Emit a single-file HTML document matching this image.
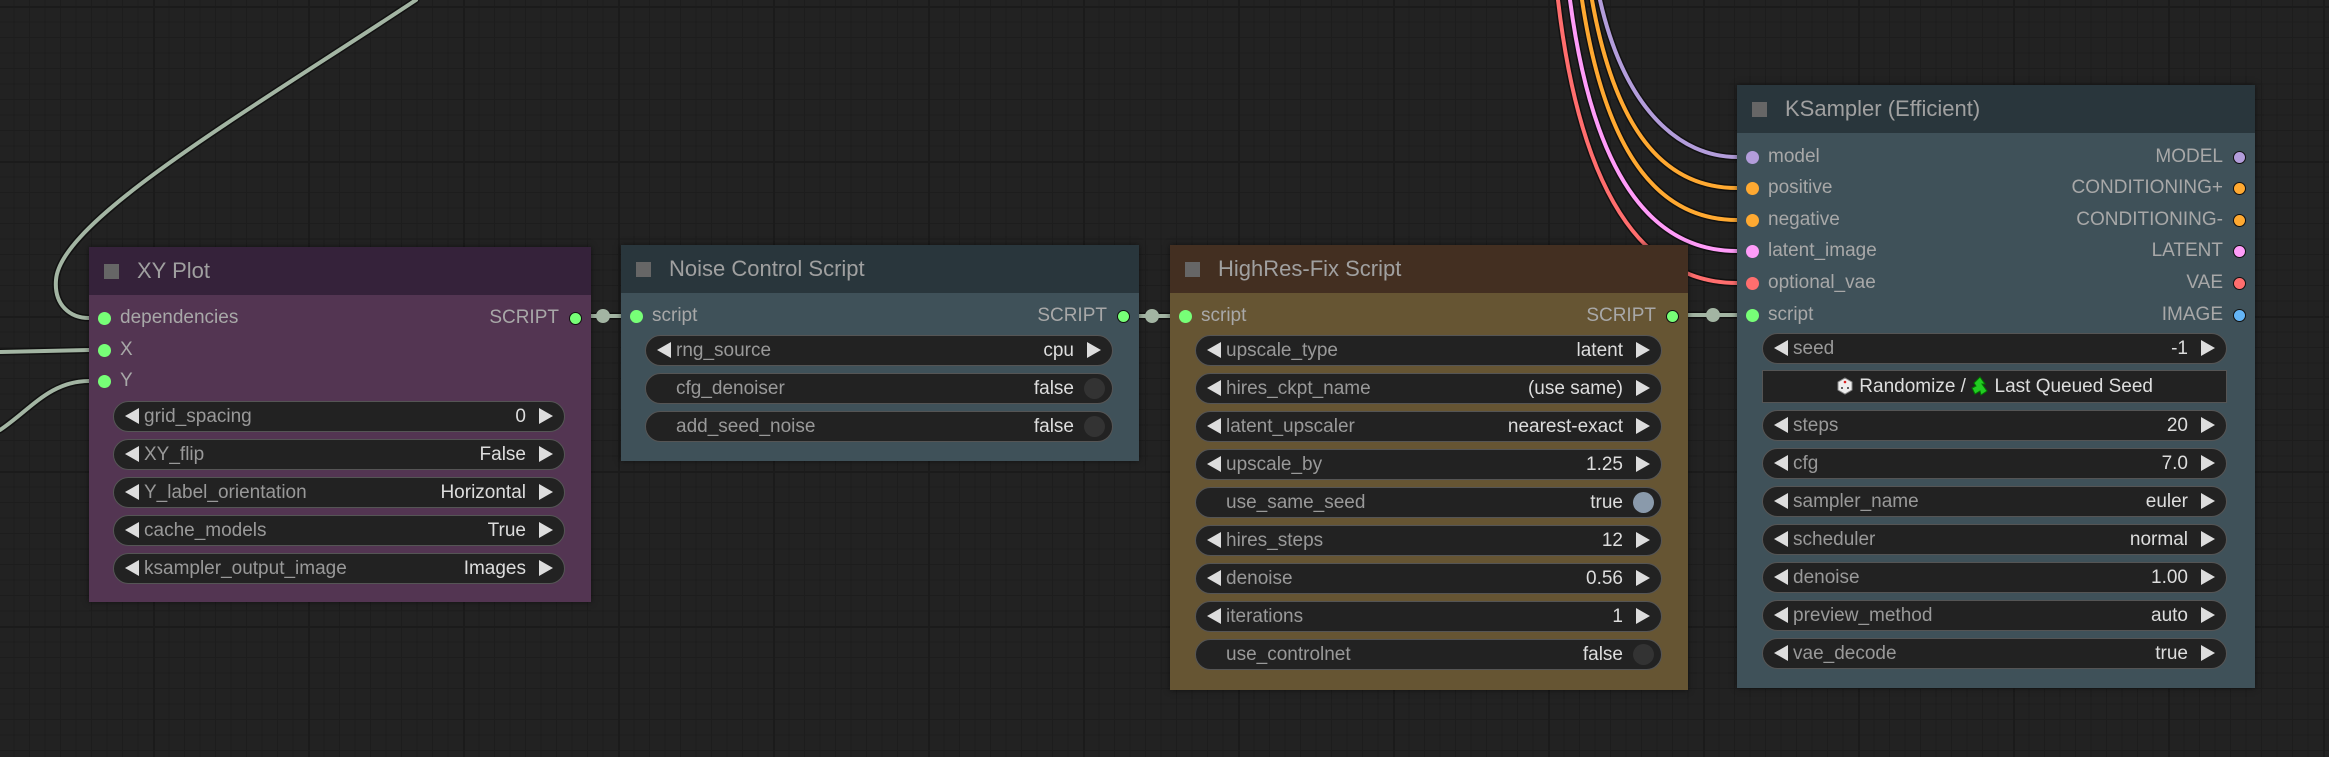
<!DOCTYPE html>
<html><head><meta charset="utf-8"><style>
*{margin:0;padding:0;box-sizing:border-box}
body{width:2329px;height:757px;overflow:hidden;position:relative;font-family:"Liberation Sans",Arial,sans-serif;font-size:19px;
background-color:#222;
background-image:
linear-gradient(to right,#1b1b1b 2px,transparent 2px),
linear-gradient(to bottom,#1b1b1b 2px,transparent 2px),
linear-gradient(to right,#1d1d1d 1px,transparent 1px),
linear-gradient(to bottom,#1d1d1d 1px,transparent 1px);
background-size:155px 155px,155px 155px,15.5px 15.5px,15.5px 15.5px;
background-position:-2px 6px,-2px 6px,-2px 6px,-2px 6px}
svg.links{position:absolute;left:0;top:0}
.node{position:absolute;box-shadow:0 0 6px rgba(0,0,0,.5)}
.title{position:absolute;left:0;top:0;right:0;height:48px;color:#a0a0a0;font-size:22px;line-height:48px;padding-left:48px}
.title:before{content:"";position:absolute;left:15px;top:17px;width:15px;height:15px;background:#666}
.slot{position:absolute;color:#a8a8a8;line-height:20px;height:20px}
.dot{position:absolute;width:13px;height:13px;border-radius:50%}
.w{position:absolute;height:31px;border:1.5px solid #555;border-radius:16px;background:#222;color:#999;line-height:30px}
.w .l{position:absolute;left:30px}
.w .v{position:absolute;right:38px;color:#ddd}
.w .la{position:absolute;left:11px;top:6px;width:0;height:0;border-top:8px solid transparent;border-bottom:8px solid transparent;border-right:14px solid #ddd}
.w .ra{position:absolute;right:11px;top:6px;width:0;height:0;border-top:8px solid transparent;border-bottom:8px solid transparent;border-left:14px solid #ddd}
.w.t .v{right:38px}
.w .tg{position:absolute;right:7px;top:4px;width:21px;height:21px;border-radius:50%;background:#333}
.w .tg.on{background:#8a9aab}
</style></head><body>
<svg class="links" width="2329" height="757">
<g fill="none" stroke-linecap="round">
<g stroke="#111" stroke-width="7">
<path d="M416,0 C250,110 60,220 56,280 C54,305 70,318 89,318"/>
<path d="M0,352 L89,350"/>
<path d="M0,430 C30,410 50,381 89,381"/>
<path d="M573,316 L621,316"/><path d="M1123,316 L1170,316"/><path d="M1671,315 L1737,315"/>
<path d="M1600,0 C1625,110 1680,157 1737,157"/>
<path d="M1592,0 C1617,140 1670,188 1737,188"/>
<path d="M1582,0 C1607,165 1665,220 1737,220"/>
<path d="M1570,0 C1595,190 1660,251 1737,251"/>
<path d="M1558,0 C1583,215 1655,283 1737,283"/>
</g>
<g stroke-width="4">
<path stroke="#a3b5a3" d="M416,0 C250,110 60,220 56,280 C54,305 70,318 89,318"/>
<path stroke="#a3b5a3" d="M0,352 L89,350"/>
<path stroke="#a3b5a3" d="M0,430 C30,410 50,381 89,381"/>
<path stroke="#a3b5a3" d="M573,316 L621,316"/><path stroke="#a3b5a3" d="M1123,316 L1170,316"/><path stroke="#a3b5a3" d="M1671,315 L1737,315"/>
<path stroke="#b39ddb" d="M1600,0 C1625,110 1680,157 1737,157"/>
<path stroke="#ffa931" d="M1592,0 C1617,140 1670,188 1737,188"/>
<path stroke="#ffa931" d="M1582,0 C1607,165 1665,220 1737,220"/>
<path stroke="#ff9cf9" d="M1570,0 C1595,190 1660,251 1737,251"/>
<path stroke="#ff6e6e" d="M1558,0 C1583,215 1655,283 1737,283"/>
</g>
<g fill="#a3b5a3"><circle cx="603" cy="316" r="7"/><circle cx="1152" cy="316" r="7"/><circle cx="1713" cy="315" r="7"/></g>
</g>
</svg>

<!-- XY Plot -->
<div class="node" style="left:89px;top:247px;width:502px;height:355px;background:#533552">
<div class="title" style="background:#35223a">XY Plot</div>
<div class="dot" style="left:9px;top:65px;background:#7f7"></div><div class="slot" style="left:31px;top:61px">dependencies</div>
<div class="slot" style="right:32px;top:61px">SCRIPT</div><div class="dot" style="right:9px;top:65px;background:#7f7;border:1.5px solid #111"></div>
<div class="dot" style="left:9px;top:97px;background:#7f7"></div><div class="slot" style="left:31px;top:93px">X</div>
<div class="dot" style="left:9px;top:128px;background:#7f7"></div><div class="slot" style="left:31px;top:124px">Y</div>
<div class="w" style="left:24px;right:26px;top:154px"><i class="la"></i><span class="l">grid_spacing</span><span class="v">0</span><i class="ra"></i></div>
<div class="w" style="left:24px;right:26px;top:192px"><i class="la"></i><span class="l">XY_flip</span><span class="v">False</span><i class="ra"></i></div>
<div class="w" style="left:24px;right:26px;top:230px"><i class="la"></i><span class="l">Y_label_orientation</span><span class="v">Horizontal</span><i class="ra"></i></div>
<div class="w" style="left:24px;right:26px;top:268px"><i class="la"></i><span class="l">cache_models</span><span class="v">True</span><i class="ra"></i></div>
<div class="w" style="left:24px;right:26px;top:306px"><i class="la"></i><span class="l">ksampler_output_image</span><span class="v">Images</span><i class="ra"></i></div>
</div>

<!-- Noise -->
<div class="node" style="left:621px;top:245px;width:518px;height:216px;background:#3f5159">
<div class="title" style="background:#29363c">Noise Control Script</div>
<div class="dot" style="left:9px;top:65px;background:#7f7"></div><div class="slot" style="left:31px;top:61px">script</div>
<div class="slot" style="right:32px;top:61px">SCRIPT</div><div class="dot" style="right:9px;top:65px;background:#7f7;border:1.5px solid #111"></div>
<div class="w" style="left:24px;right:26px;top:90px"><i class="la"></i><span class="l">rng_source</span><span class="v">cpu</span><i class="ra"></i></div>
<div class="w t" style="left:24px;right:26px;top:128px"><span class="l">cfg_denoiser</span><span class="v">false</span><i class="tg"></i></div>
<div class="w t" style="left:24px;right:26px;top:166px"><span class="l">add_seed_noise</span><span class="v">false</span><i class="tg"></i></div>
</div>

<!-- HighRes -->
<div class="node" style="left:1170px;top:245px;width:518px;height:445px;background:#665533">
<div class="title" style="background:#432f21">HighRes-Fix Script</div>
<div class="dot" style="left:9px;top:65px;background:#7f7"></div><div class="slot" style="left:31px;top:61px">script</div>
<div class="slot" style="right:32px;top:61px">SCRIPT</div><div class="dot" style="right:9px;top:65px;background:#7f7;border:1.5px solid #111"></div>
<div class="w" style="left:25px;right:26px;top:90px"><i class="la"></i><span class="l">upscale_type</span><span class="v">latent</span><i class="ra"></i></div>
<div class="w" style="left:25px;right:26px;top:128px"><i class="la"></i><span class="l">hires_ckpt_name</span><span class="v">(use same)</span><i class="ra"></i></div>
<div class="w" style="left:25px;right:26px;top:166px"><i class="la"></i><span class="l">latent_upscaler</span><span class="v">nearest-exact</span><i class="ra"></i></div>
<div class="w" style="left:25px;right:26px;top:204px"><i class="la"></i><span class="l">upscale_by</span><span class="v">1.25</span><i class="ra"></i></div>
<div class="w t" style="left:25px;right:26px;top:242px"><span class="l">use_same_seed</span><span class="v">true</span><i class="tg on"></i></div>
<div class="w" style="left:25px;right:26px;top:280px"><i class="la"></i><span class="l">hires_steps</span><span class="v">12</span><i class="ra"></i></div>
<div class="w" style="left:25px;right:26px;top:318px"><i class="la"></i><span class="l">denoise</span><span class="v">0.56</span><i class="ra"></i></div>
<div class="w" style="left:25px;right:26px;top:356px"><i class="la"></i><span class="l">iterations</span><span class="v">1</span><i class="ra"></i></div>
<div class="w t" style="left:25px;right:26px;top:394px"><span class="l">use_controlnet</span><span class="v">false</span><i class="tg"></i></div>
</div>

<!-- KSampler -->
<div class="node" style="left:1737px;top:85px;width:518px;height:603px;background:#3f5159">
<div class="title" style="background:#29363c">KSampler (Efficient)</div>
<div class="dot" style="left:9px;top:66px;background:#b39ddb"></div><div class="slot" style="left:31px;top:62px">model</div>
<div class="slot" style="right:32px;top:62px">MODEL</div><div class="dot" style="right:9px;top:66px;background:#b39ddb;border:1.5px solid #111"></div>
<div class="dot" style="left:9px;top:97px;background:#ffa931"></div><div class="slot" style="left:31px;top:93px">positive</div>
<div class="slot" style="right:32px;top:93px">CONDITIONING+</div><div class="dot" style="right:9px;top:97px;background:#ffa931;border:1.5px solid #111"></div>
<div class="dot" style="left:9px;top:129px;background:#ffa931"></div><div class="slot" style="left:31px;top:125px">negative</div>
<div class="slot" style="right:32px;top:125px">CONDITIONING-</div><div class="dot" style="right:9px;top:129px;background:#ffa931;border:1.5px solid #111"></div>
<div class="dot" style="left:9px;top:160px;background:#ff9cf9"></div><div class="slot" style="left:31px;top:156px">latent_image</div>
<div class="slot" style="right:32px;top:156px">LATENT</div><div class="dot" style="right:9px;top:160px;background:#ff9cf9;border:1.5px solid #111"></div>
<div class="dot" style="left:9px;top:192px;background:#ff6e6e"></div><div class="slot" style="left:31px;top:188px">optional_vae</div>
<div class="slot" style="right:32px;top:188px">VAE</div><div class="dot" style="right:9px;top:192px;background:#ff6e6e;border:1.5px solid #111"></div>
<div class="dot" style="left:9px;top:224px;background:#7f7"></div><div class="slot" style="left:31px;top:220px">script</div>
<div class="slot" style="right:32px;top:220px">IMAGE</div><div class="dot" style="right:9px;top:224px;background:#64b5f6;border:1.5px solid #111"></div>
<div class="w" style="left:25px;right:28px;top:248px"><i class="la"></i><span class="l">seed</span><span class="v">-1</span><i class="ra"></i></div>
<div style="position:absolute;left:25px;right:28px;top:285px;height:33px;background:#222;border:1.5px solid #555;color:#ddd;text-align:center;line-height:31px">
<svg width="18" height="18" viewBox="0 0 18 18" style="vertical-align:-3px"><path d="M9 1 L16 5 L16 13 L9 17 L2 13 L2 5Z" fill="#eee" stroke="#888"/><circle cx="9" cy="5" r="1.3" fill="#d22"/><circle cx="6" cy="11" r="1" fill="#333"/><circle cx="12" cy="11" r="1" fill="#333"/></svg> Randomize / <svg width="18" height="20" viewBox="0 0 18 20" style="vertical-align:-4px"><path d="M9 1 L14 8 L11 8 L16 15 L10 19 L9 15 L4 18 L1 12 L5 10 L3 7Z" fill="#2c2" stroke="#070" stroke-width="1"/></svg> Last Queued Seed</div>
<div class="w" style="left:25px;right:28px;top:325px"><i class="la"></i><span class="l">steps</span><span class="v">20</span><i class="ra"></i></div>
<div class="w" style="left:25px;right:28px;top:363px"><i class="la"></i><span class="l">cfg</span><span class="v">7.0</span><i class="ra"></i></div>
<div class="w" style="left:25px;right:28px;top:401px"><i class="la"></i><span class="l">sampler_name</span><span class="v">euler</span><i class="ra"></i></div>
<div class="w" style="left:25px;right:28px;top:439px"><i class="la"></i><span class="l">scheduler</span><span class="v">normal</span><i class="ra"></i></div>
<div class="w" style="left:25px;right:28px;top:477px"><i class="la"></i><span class="l">denoise</span><span class="v">1.00</span><i class="ra"></i></div>
<div class="w" style="left:25px;right:28px;top:515px"><i class="la"></i><span class="l">preview_method</span><span class="v">auto</span><i class="ra"></i></div>
<div class="w" style="left:25px;right:28px;top:553px"><i class="la"></i><span class="l">vae_decode</span><span class="v">true</span><i class="ra"></i></div>
</div>
</body></html>
